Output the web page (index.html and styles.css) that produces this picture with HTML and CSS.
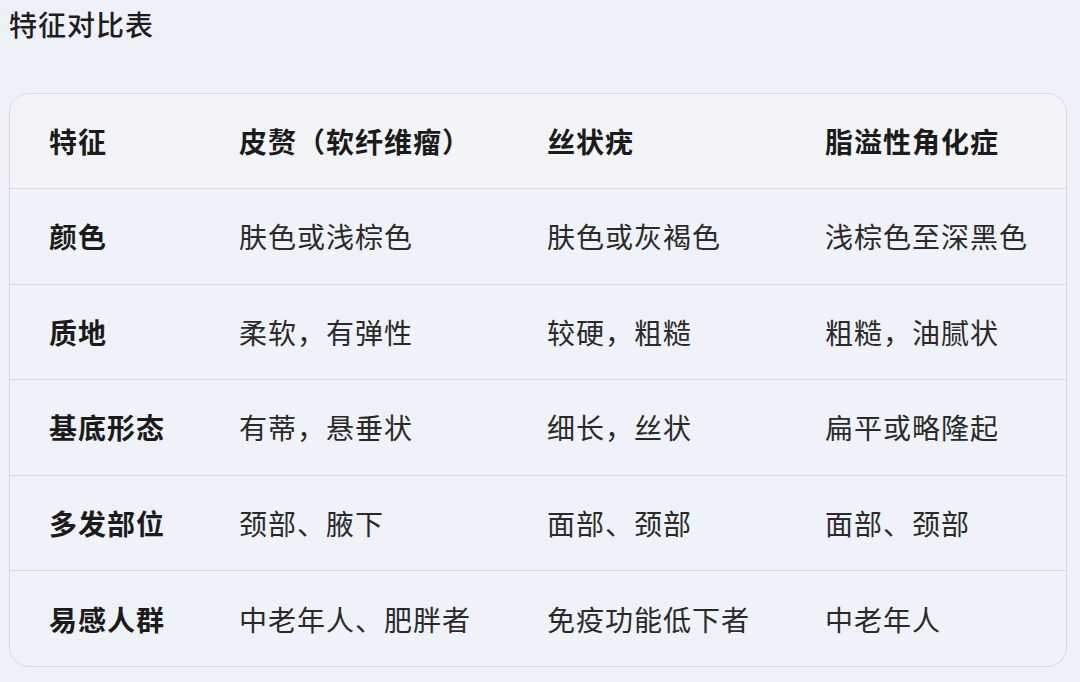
FILE: index.html
```html
<!DOCTYPE html>
<html lang="zh">
<head>
<meta charset="utf-8">
<title>特征对比表</title>
<link rel="stylesheet" href="styles.css">
</head>
<body>
<div class="page">
  <h1 class="title">特征对比表</h1>
  <div class="card">
    <table class="cmp">
      <colgroup>
        <col class="c1"><col class="c2"><col class="c3"><col class="c4">
      </colgroup>
      <thead>
        <tr><th>特征</th><th>皮赘（软纤维瘤）</th><th>丝状疣</th><th>脂溢性角化症</th></tr>
      </thead>
      <tbody>
        <tr><th>颜色</th><td>肤色或浅棕色</td><td>肤色或灰褐色</td><td>浅棕色至深黑色</td></tr>
        <tr><th>质地</th><td>柔软，有弹性</td><td>较硬，粗糙</td><td>粗糙，油腻状</td></tr>
        <tr><th>基底形态</th><td>有蒂，悬垂状</td><td>细长，丝状</td><td>扁平或略隆起</td></tr>
        <tr><th>多发部位</th><td>颈部、腋下</td><td>面部、颈部</td><td>面部、颈部</td></tr>
        <tr><th>易感人群</th><td>中老年人、肥胖者</td><td>免疫功能低下者</td><td>中老年人</td></tr>
      </tbody>
    </table>
  </div>
</div>
</body>
</html>
```

FILE: styles.css
```css
html, body {
  margin: 0;
  padding: 0;
  background: #eef1f7;
}
.page {
  width: 1080px;
  height: 682px;
  box-sizing: border-box;
  padding: 0 13px 0 9px;
  font-family: "Noto Sans CJK SC", "Noto Sans", sans-serif;
  color: #222;
}
.title {
  margin: 0;
  padding-top: 5px;
  height: 93px;
  box-sizing: border-box;
  font-size: 28px;
  letter-spacing: 1px;
  line-height: 38px;
  font-weight: 500;
  color: #1e1e1e;
}
.card {
  border: 1px solid #d6d9df;
  border-radius: 20px;
  overflow: hidden;
  background: #eff2f8;
  width: 1058px;
  box-sizing: border-box;
}
.cmp {
  width: 100%;
  border-collapse: collapse;
  table-layout: fixed;
}
.c1 { width: 190px; }
.c2 { width: 308px; }
.c3 { width: 278px; }
.cmp th, .cmp td {
  text-align: left;
  padding: 0 0 0 39px;
  font-size: 28px;
  letter-spacing: 1px;
  line-height: 38px;
  height: 94px;
  white-space: nowrap;
  vertical-align: middle;
}
.cmp th { font-weight: 700; color: #1b1b1b; }
.cmp td { font-weight: 400; color: #2a2a2a; }
.cmp thead tr { background: #f3f4f7; }
.cmp tbody tr { border-top: 1px solid #d9dbe0; }
.cmp tbody th, .cmp tbody td { height: 94.6px; }
```
